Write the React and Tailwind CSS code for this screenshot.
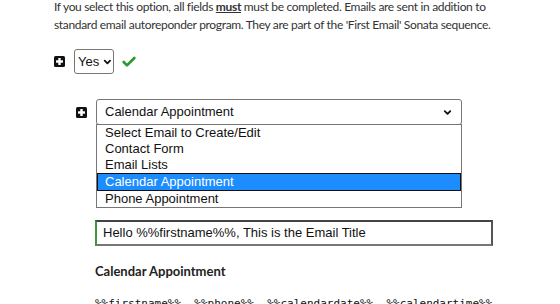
import { ChevronDown, Check } from 'lucide-react';

function PlusBox() {
  return (
    <svg width="11" height="11" viewBox="0 0 11 11" className="shrink-0">
      <rect x="0" y="0" width="11" height="11" rx="1.5" fill="#111" />
      <rect x="4.3" y="2" width="2.4" height="7" fill="#fff" />
      <rect x="2" y="4.3" width="7" height="2.4" fill="#fff" />
    </svg>
  );
}

const options = [
  'Select Email to Create/Edit',
  'Contact Form',
  'Email Lists',
  'Calendar Appointment',
  'Phone Appointment',
];

export default function App() {
  return (
    <div className="w-[560px] h-[304px] overflow-hidden bg-white relative" style={{ fontFamily: 'Lato, "Open Sans", sans-serif' }}>
      <p className="pl-[54px] pr-4 -mt-[2px] text-[12px] leading-[18px] tracking-[-0.33px] text-[#333]">
        If you select this option, all fields <b className="underline font-bold">must</b> must be completed. Emails are sent in addition to
        <br />
        standard email autoreponder program. They are part of the 'First Email' Sonata sequence.
      </p>

      <div className="flex items-center mt-[15px] pl-[54px]">
        <PlusBox />
        <div className="ml-[9px] h-[25px] w-[40px] flex items-center border border-[#767676] rounded-[3px] pl-[3px] text-[13px] text-[#111]" style={{ fontFamily: '"Liberation Sans", Arial, sans-serif' }}>
          Yes
          <ChevronDown size={12} strokeWidth={4} className="ml-[3px]" />
        </div>
        <Check size={16} strokeWidth={4} className="ml-[7px] text-[#2a9a2a]" />
      </div>

      <div className="relative mt-[25px] pl-[76px]" style={{ fontFamily: '"Liberation Sans", Arial, sans-serif' }}>
        <div className="flex items-center">
          <PlusBox />
          <div className="ml-[9px] h-[26px] w-[366px] flex items-center justify-between border border-[#767676] rounded-[3px] pl-[8px] pr-[8px] text-[13px] text-[#111]">
            Calendar Appointment
            <ChevronDown size={11} strokeWidth={4} />
          </div>
        </div>
        <div className="absolute left-[96px] top-[25px] w-[366px] border border-[#767676] bg-white text-[13px] leading-[16px] text-[#111] z-10">
          {options.map(o => (
            <div
              key={o}
              className={o === 'Calendar Appointment'
                ? 'pl-[7px] bg-[#1c8cff] text-white border border-[#111]'
                : 'pl-[8px]'}
            >
              {o}
            </div>
          ))}
        </div>
      </div>

      <div className="ml-[95px] mt-[95px] w-[398px] h-[26px] flex items-center pl-[6px] border-2 border-t-[#444] border-r-[#555] border-b-[#777] border-l-[#3a9a3a] text-[13px] text-[#111]" style={{ fontFamily: '"Liberation Sans", Arial, sans-serif' }}>
        Hello %%firstname%%, This is the Email Title
      </div>

      <h3 className="ml-[95px] mt-[16px] text-[13px] font-bold text-[#222]">Calendar Appointment</h3>

      <div className="ml-[95px] mt-[14px] text-[11px] whitespace-pre text-[#111]" style={{ fontFamily: '"DejaVu Sans Mono", monospace' }}>
        {'%%firstname%%  %%phone%%  %%calendardate%%  %%calendartime%%'}
      </div>
    </div>
  );
}
